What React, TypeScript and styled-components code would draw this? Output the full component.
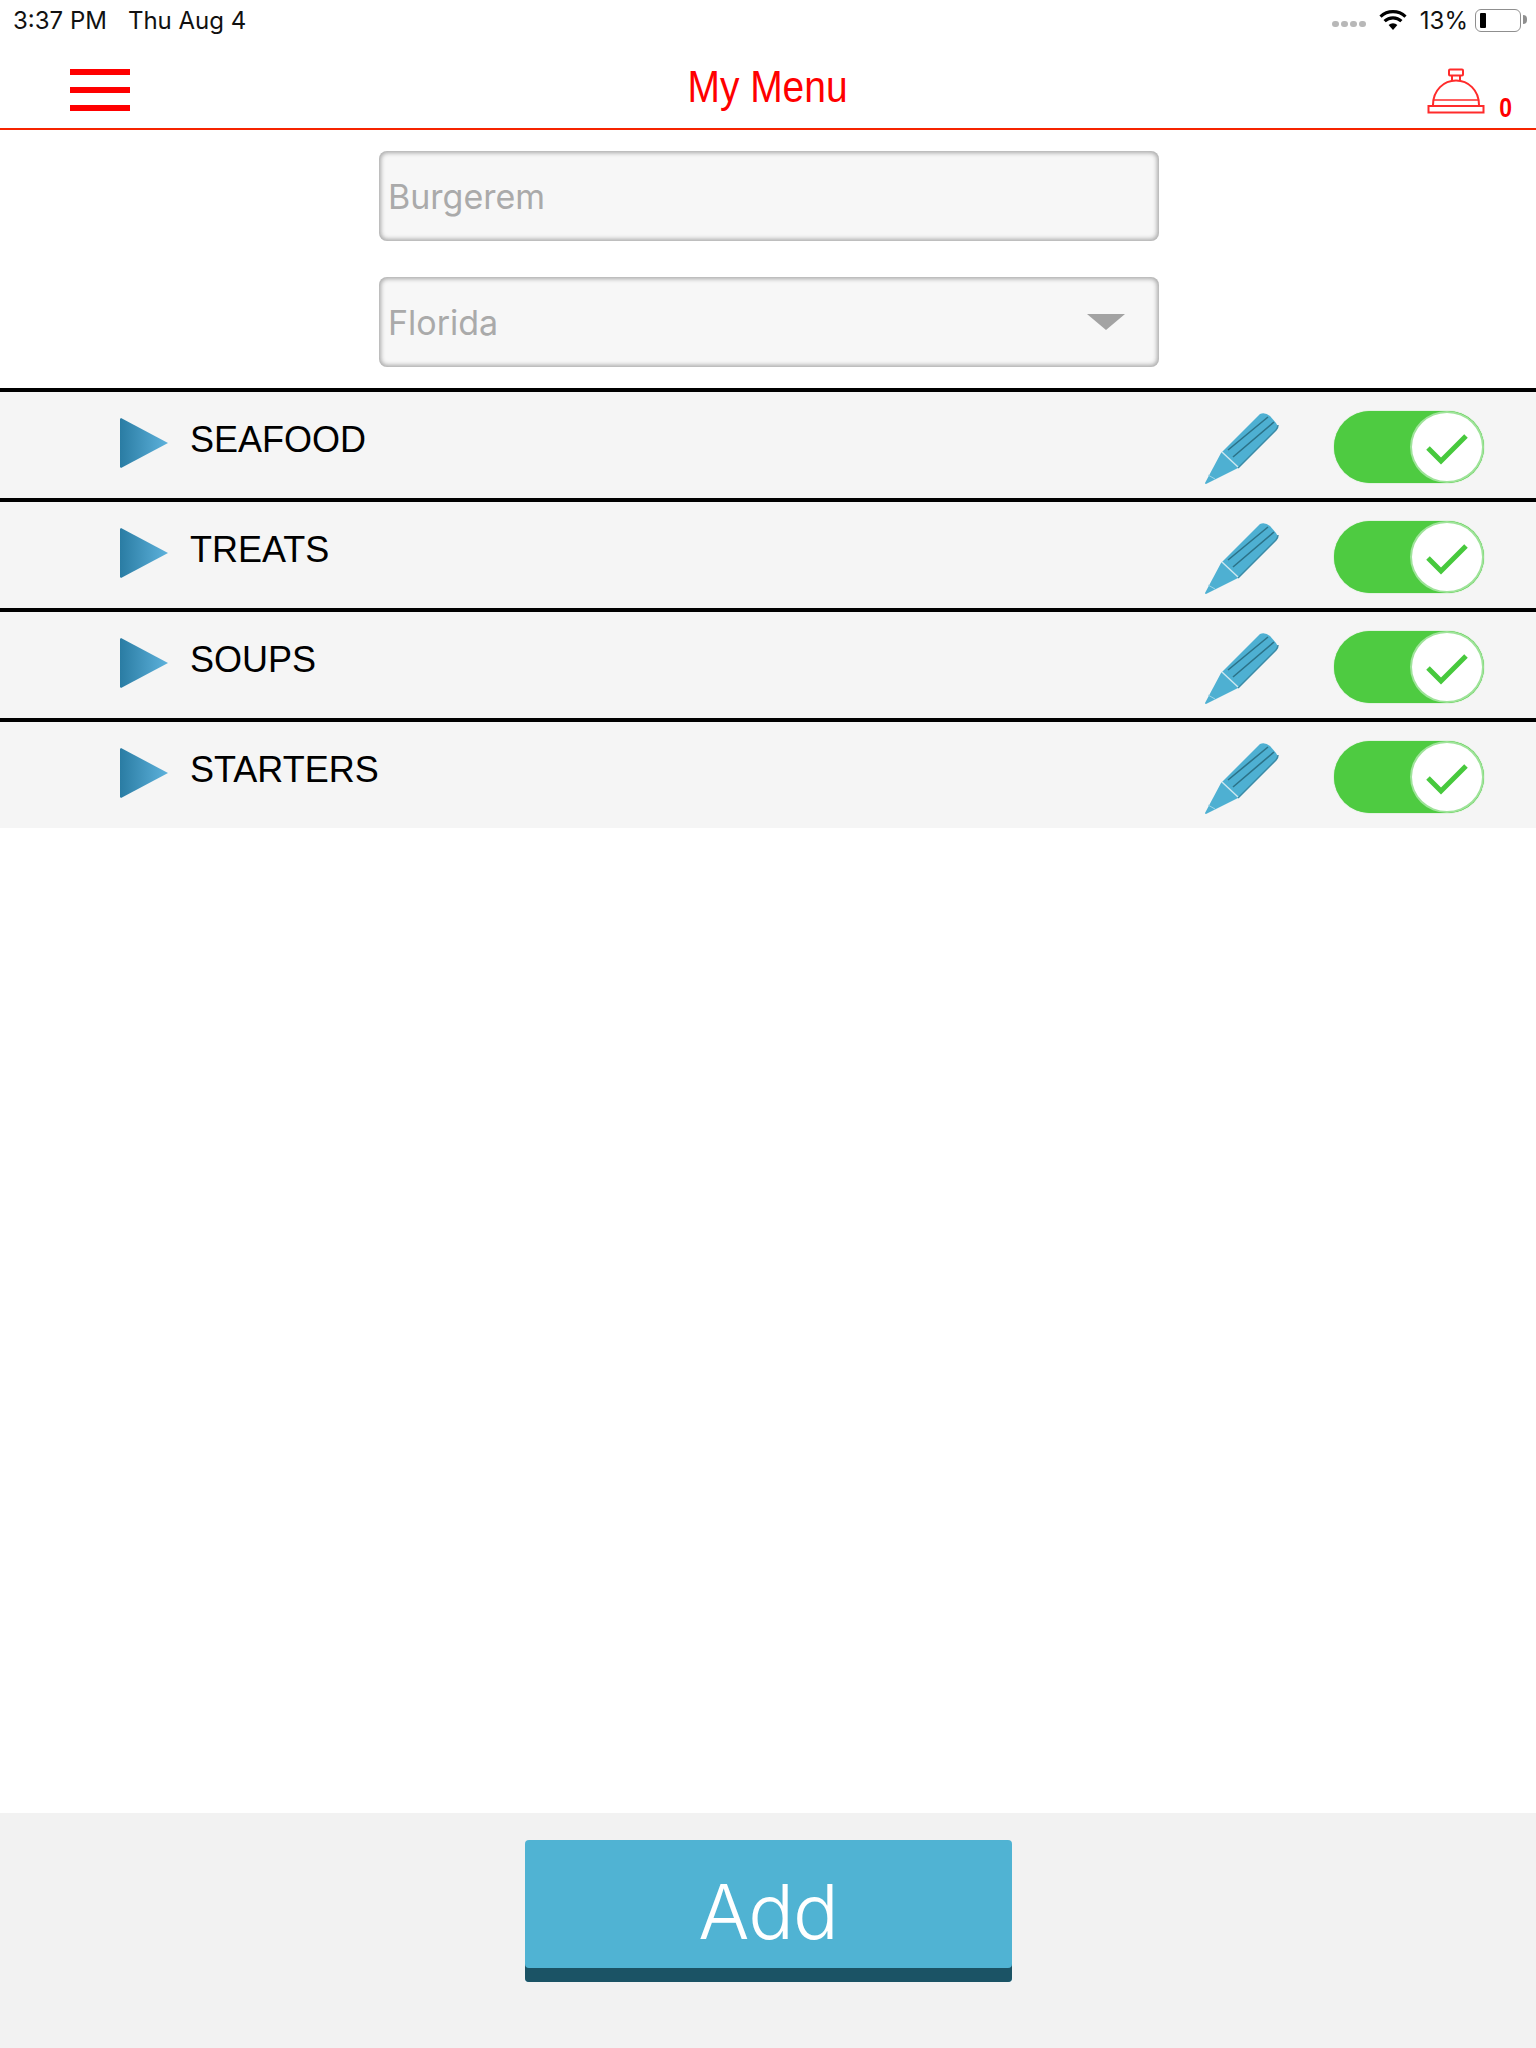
import React from 'react';
import styled, { createGlobalStyle } from 'styled-components';

const categories = ['SEAFOOD', 'TREATS', 'SOUPS', 'STARTERS'];

const GlobalStyle = createGlobalStyle`
  * {
    box-sizing: border-box;
  }

  body {
    margin: 0;
    background-color: #fff;
    font-family: Inter, 'Liberation Sans', sans-serif;
  }
`;

const App = () => {
  return (
    <Page>
      <GlobalStyle />
      <StatusBar>
        <Clock>3:37 PM</Clock>
        <Clock>Thu Aug 4</Clock>
        <StatusRight>
          <SignalDots>
            <i />
            <i />
            <i />
            <i />
          </SignalDots>
          <svg width="28" height="20" viewBox="0 0 28 20">
            <path d="M14 20 L9.6 15 A6.6 6.6 0 0 1 18.4 15 Z" fill="#000" />
            <path d="M5.6 11.2 A12.2 12.2 0 0 1 22.4 11.2" fill="none" stroke="#000" strokeWidth="3.2" />
            <path d="M1.5 6.6 A18.4 18.4 0 0 1 26.5 6.6" fill="none" stroke="#000" strokeWidth="3.2" />
          </svg>
          <BatteryText>13%</BatteryText>
          <Battery>
            <BatteryLevel />
          </Battery>
        </StatusRight>
      </StatusBar>

      <Header>
        <MenuButton>
          <span />
          <span />
          <span />
        </MenuButton>
        <Title>My Menu</Title>
        <BellWrap>
          <svg width="58" height="46" viewBox="0 0 58 46" fill="none" stroke="#ff2b2b" strokeWidth="2">
            <rect x="22" y="1.5" width="14" height="6" rx="1" />
            <path d="M25 7.5 V13 M33 7.5 V13" />
            <path d="M6 37 C6 22 17 12.5 29 12.5 C41 12.5 52 22 52 37" />
            <path d="M7 32 H51" strokeWidth="1.4" />
            <rect x="1.5" y="38" width="55" height="6.5" />
          </svg>
          <BellCount>0</BellCount>
        </BellWrap>
      </Header>

      <Filters>
        <Field>Burgerem</Field>
        <Field>
          Florida
          <Caret />
        </Field>
      </Filters>

      <List>
        {categories.map((name) => (
          <Row key={name}>
            <Arrow width="48" height="50" viewBox="0 0 48 50">
              <defs>
                <linearGradient id="arrowFill" x1="0" y1="0" x2="1" y2="0">
                  <stop offset="0" stopColor="#2a7ca3" />
                  <stop offset="1" stopColor="#5eb2dc" />
                </linearGradient>
              </defs>
              <path d="M0 1 L1 0 L48 25 L1 50 L0 49 Z" fill="url(#arrowFill)" />
            </Arrow>
            <RowName>{name}</RowName>
            <Pencil width="74" height="72" viewBox="0 0 74 72">
              <path d="M16 40 L55 1 Q60 -1 65 3 L71 10 Q74 14 71 17 L33 55 L1 71 Q0 71 0 70 Z" fill="#4eb0d2" />
              <path d="M33 55 L71 17 Q73 15 73 12" stroke="#3a8aa6" strokeWidth="1.5" fill="none" />
              <path d="M23 37 L63 4 M28 44 L69 9" stroke="#2c7288" strokeWidth="1.6" fill="none" />
              <path d="M17 39 L33 54" stroke="#cfe8f0" strokeWidth="1.4" fill="none" />
              <path d="M3 62 L10 66" stroke="#9fd4e6" strokeWidth="1" fill="none" />
            </Pencil>
            <Toggle>
              <Knob>
                <svg width="72" height="72" viewBox="0 0 72 72" fill="none">
                  <path d="M18 37 L31 50 L56 25" stroke="#47c93d" strokeWidth="5" />
                </svg>
              </Knob>
            </Toggle>
          </Row>
        ))}
      </List>

      <Footer>
        <AddButton>Add</AddButton>
      </Footer>
    </Page>
  );
};

const Page = styled.div`
  display: flex;
  flex-direction: column;
  width: 100%;
  height: 2048px;
  overflow: hidden;
  background-color: #fff;
`;

const StatusBar = styled.div`
  display: flex;
  align-items: center;
  gap: 21px;
  height: 40px;
  padding: 0 15px 0 13px;
`;

const Clock = styled.span`
  font-size: 24px;
  color: #111;
`;

const StatusRight = styled.div`
  display: flex;
  align-items: center;
  margin-left: auto;
`;

const SignalDots = styled.div`
  display: flex;
  gap: 2.5px;
  margin: 8px 13px 0 0;

  i {
    width: 6.5px;
    height: 6.5px;
    border-radius: 50%;
    background-color: #b8b8b8;
  }
`;

const BatteryText = styled.span`
  margin: 0 7px 0 13px;
  font-size: 24px;
  color: #111;
`;

const Battery = styled.div`
  position: relative;
  display: flex;
  align-items: center;
  width: 46px;
  height: 23px;
  padding: 3px 4px;
  border: 1.5px solid #8f8f8f;
  border-radius: 6px;

  &::after {
    content: '';
    position: absolute;
    top: 5px;
    right: -7px;
    width: 4px;
    height: 9px;
    border-radius: 0 4px 4px 0;
    background-color: #8f8f8f;
  }
`;

const BatteryLevel = styled.div`
  width: 6px;
  height: 100%;
  border-radius: 1px;
  background-color: #000;
`;

const Header = styled.div`
  display: grid;
  grid-template-columns: 1fr auto 1fr;
  align-items: start;
  height: 90px;
  padding: 28px 23px 0 0;
  border-bottom: 2px solid #f62400;
`;

const MenuButton = styled.div`
  display: flex;
  flex-direction: column;
  gap: 12px;
  width: 60px;
  margin: 1px 0 0 70px;

  span {
    height: 6px;
    background-color: #ff0000;
  }
`;

const Title = styled.div`
  margin: -7px 0 0 23px;
  font-family: 'Liberation Sans', sans-serif;
  font-size: 45px;
  line-height: 52px;
  color: #ff0000;
  white-space: nowrap;
  transform: scaleX(0.865);
`;

const BellWrap = styled.div`
  display: flex;
  align-items: flex-end;
  justify-content: flex-end;
  gap: 13px;
`;

const BellCount = styled.span`
  position: relative;
  top: 4px;
  font-family: 'Liberation Sans', sans-serif;
  font-size: 27px;
  font-weight: 700;
  line-height: 20px;
  color: #ff0000;
  transform: scaleX(0.85);
`;

const Filters = styled.div`
  display: flex;
  flex-direction: column;
  align-items: center;
  gap: 36px;
  padding: 21px 0 21px 2px;
`;

const Field = styled.div`
  display: flex;
  align-items: center;
  justify-content: space-between;
  width: 780px;
  height: 90px;
  padding: 0 34px 0 9px;
  border-radius: 8px;
  background-color: #f7f7f7;
  box-shadow: inset 0 0 4px 2px #aaa;
  font-size: 34px;
  color: #aaa;
`;

const Caret = styled.div`
  width: 0;
  height: 0;
  border-style: solid;
  border-width: 16px 19px 0;
  border-color: #a3a3a3 transparent transparent;
`;

const List = styled.div`
  display: flex;
  flex-direction: column;
`;

const Row = styled.div`
  display: flex;
  align-items: flex-start;
  height: 110px;
  padding: 19px 52px 0 120px;
  border-top: 4px solid #000;
  background-color: #f5f5f5;
`;

const Arrow = styled.svg`
  flex-shrink: 0;
  margin-top: 7px;
`;

const RowName = styled.div`
  margin: 7px 0 0 22px;
  font-family: 'Liberation Sans', sans-serif;
  font-size: 36px;
  line-height: 44px;
  color: #000;
`;

const Pencil = styled.svg`
  flex-shrink: 0;
  margin: 2px 0 0 auto;
`;

const Toggle = styled.div`
  display: flex;
  justify-content: flex-end;
  width: 150px;
  height: 72px;
  margin-left: 55px;
  border-radius: 36px;
  background-color: #4ecb41;
  box-shadow: 0 0 1px #4ecb41;
`;

const Knob = styled.div`
  width: 74px;
  height: 72px;
  border: 2px solid #9fe39a;
  border-radius: 50%;
  background-color: #fff;

  svg {
    display: block;
    margin: -2px 0 0 -2px;
  }
`;

const Footer = styled.div`
  display: flex;
  justify-content: center;
  margin-top: auto;
  height: 235px;
  padding-top: 27px;
  background-color: #f2f2f2;
`;

const AddButton = styled.div`
  display: flex;
  align-items: center;
  justify-content: center;
  width: 487px;
  height: 142px;
  border-radius: 4px;
  background-color: #50b3d3;
  box-shadow: inset 0 -14px 0 #1b5365;
  font-size: 76px;
  font-weight: 350;
  letter-spacing: -1px;
  color: #fff;
`;

export default App;
